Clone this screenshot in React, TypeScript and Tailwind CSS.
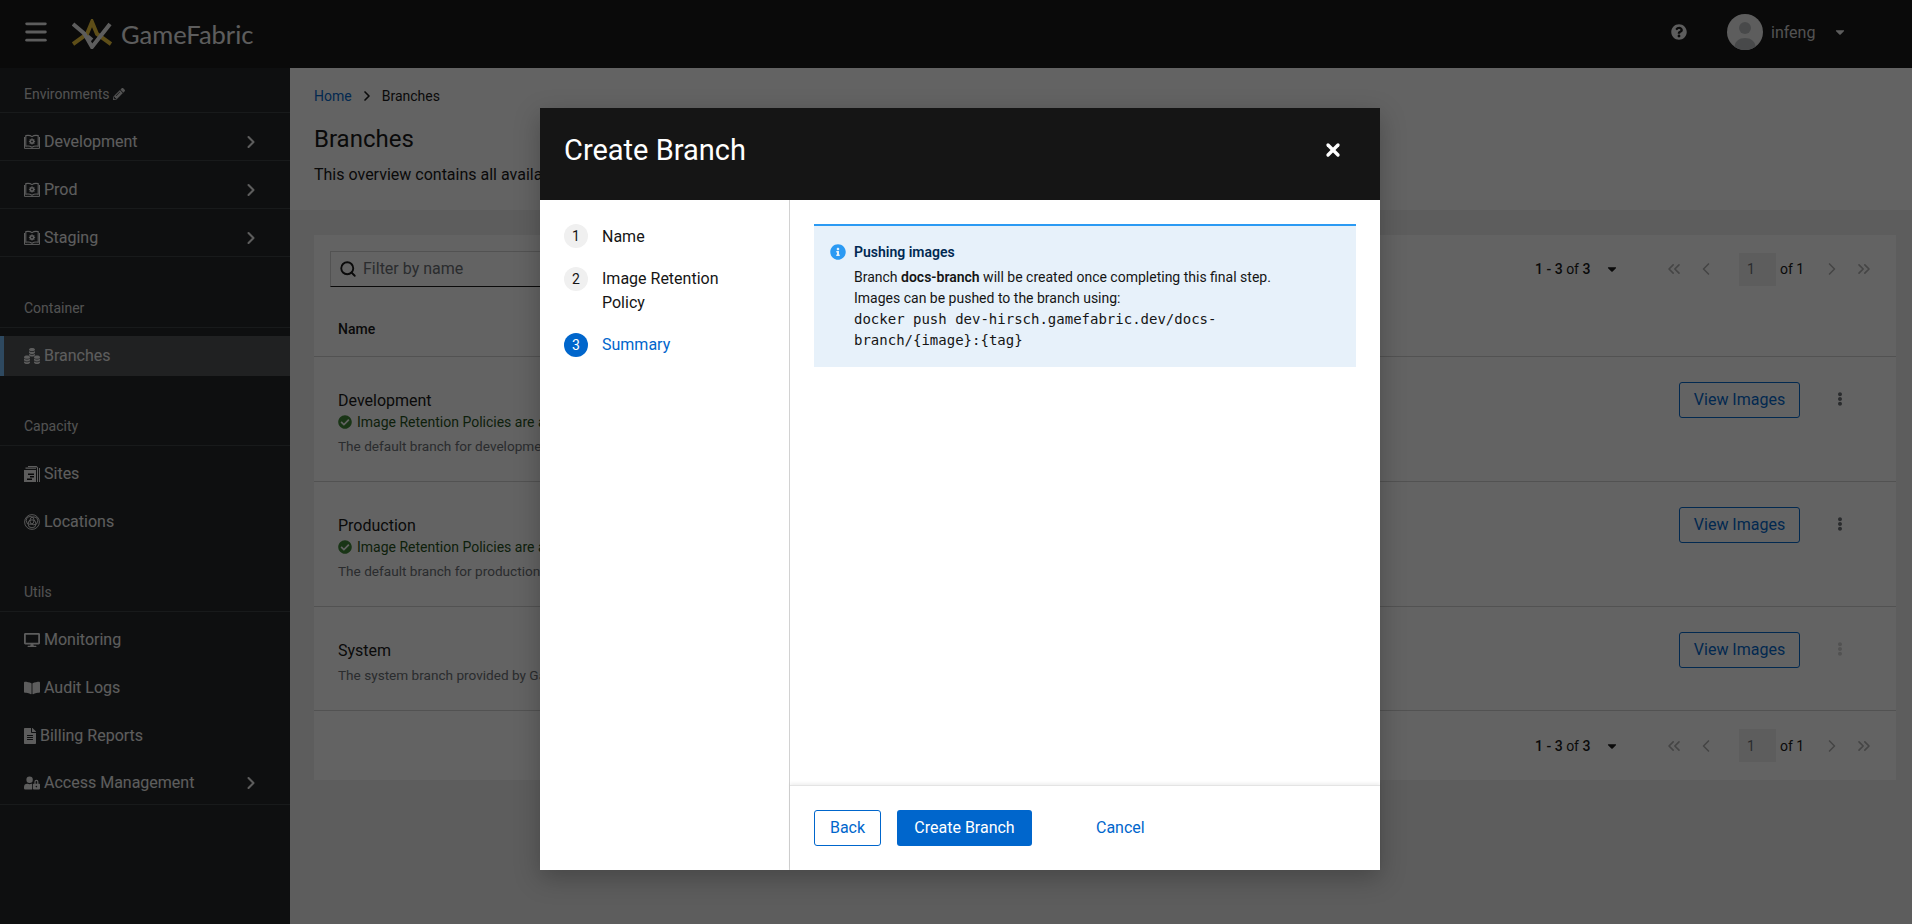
import { ChevronRight, ChevronLeft, ChevronsLeft, ChevronsRight, Menu, Search, X } from "lucide-react";
import {
  FaBookOpen,
  FaCaretDown,
  FaCheckCircle,
  FaDesktop,
  FaEllipsisV,
  FaFileAlt,
  FaInfoCircle,
  FaPencilAlt,
  FaQuestionCircle,
  FaUserLock,
} from "react-icons/fa";
import type { ReactNode } from "react";

function BookCogIcon() {
  return (
    <svg viewBox="0 0 16 16" className="h-4 w-4 shrink-0" fill="none" stroke="currentColor">
      <path d="M1.8 1.6c2.4-.5 4.6-.2 6.2 1 1.6-1.2 3.8-1.5 6.2-1v10.6c-2.4-.4-4.6-.1-6.2 1-1.6-1.1-3.8-1.4-6.2-1z" strokeWidth="1.1" />
      <path d="M.5 3v11.4h15V3" strokeWidth="1" />
      <circle cx="8" cy="7.4" r="1.7" strokeWidth="1.6" />
      <path d="M8 4.2v1.2M8 9.4v1.2M4.9 7.4h1.2M9.9 7.4h1.2M5.8 5.2l.8.8M9.4 8.8l.8.8M10.2 5.2l-.8.8M6.6 8.8l-.8.8" strokeWidth="1" />
    </svg>
  );
}

function CoinsIcon() {
  return (
    <svg viewBox="0 0 16 16" className="h-4 w-4 shrink-0" fill="currentColor">
      <path d="M5 1.6C5 .7 6.3 0 8 0s3 .7 3 1.6S9.7 3.2 8 3.2 5 2.5 5 1.6zM5 3c.6.6 1.7 1 3 1s2.4-.4 3-1v1.4c0 .8-1.3 1.5-3 1.5s-3-.7-3-1.5zM5 5.7c.6.6 1.7 1 3 1s2.4-.4 3-1v1.4C11 7.9 9.7 8.6 8 8.6s-3-.7-3-1.5z" />
      <path d="M0 9.2c0-.9 1.3-1.6 3-1.6s3 .7 3 1.6-1.3 1.6-3 1.6-3-.7-3-1.6zM0 10.6c.6.6 1.7 1 3 1s2.4-.4 3-1V12c0 .8-1.3 1.5-3 1.5S0 12.8 0 12zM0 13.3c.6.6 1.7 1 3 1s2.4-.4 3-1v1.1c0 .8-1.3 1.5-3 1.5s-3-.7-3-1.5z" />
      <path d="M10 9.2c0-.9 1.3-1.6 3-1.6s3 .7 3 1.6-1.3 1.6-3 1.6-3-.7-3-1.6zM10 10.6c.6.6 1.7 1 3 1s2.4-.4 3-1V12c0 .8-1.3 1.5-3 1.5s-3-.7-3-1.5zM10 13.3c.6.6 1.7 1 3 1s2.4-.4 3-1v1.1c0 .8-1.3 1.5-3 1.5s-3-.7-3-1.5z" />
    </svg>
  );
}

function SitesIcon() {
  return (
    <svg viewBox="0 0 16 16" className="h-4 w-4 shrink-0" fill="currentColor">
      <path d="M0 4h12v12H0z" />
      <path d="M1.5 1.5H12v1.3H1.5zM4 0h8.5L14 1.5V16h-1V2l-1-1H4zM15 2h1v14h-1z" />
      <path d="M4 7.5h6v1.4H4zM6 10h4v1.4H6zM3 12.5h5v1.4H3z" fill="#101214" />
    </svg>
  );
}

function LocationsIcon() {
  return (
    <svg viewBox="0 0 16 16" className="h-4 w-4 shrink-0" fill="none" stroke="currentColor" strokeWidth="0.9">
      <circle cx="8" cy="8" r="7.4" />
      <circle cx="6.2" cy="6.4" r="4" />
      <circle cx="9.8" cy="6.8" r="4" />
      <circle cx="8" cy="9.8" r="4" />
    </svg>
  );
}

function NavRow({ icon, label, chevron, className = "h-12" }: { icon: ReactNode; label: string; chevron?: boolean; className?: string }) {
  return (
    <div className={`flex items-center pl-6 text-base text-[#f0f0f0] ${className}`}>
      <span className="mr-1 flex items-center">{icon}</span>
      <span>{label}</span>
      {chevron && <ChevronRight className="ml-auto mr-[29px] h-5 w-5" strokeWidth={2.5} />}
    </div>
  );
}

function NavLabel({ children }: { children: ReactNode }) {
  return <div className="flex h-[41px] items-center border-b border-[#3c3f42] pl-6 pt-px text-sm text-[#d2d2d2]">{children}</div>;
}

function Pagination() {
  return (
    <div className="flex items-center text-sm text-[#151515]">
      <span className="w-[70px] whitespace-nowrap font-medium">
        1 - 3 <span className="font-normal">of</span> 3
      </span>
      <FaCaretDown className="h-3.5 w-3.5 text-[#151515]" />
      <ChevronsLeft className="ml-[45px] h-5 w-5 text-[#b0b0b0]" />
      <ChevronLeft className="ml-3 h-5 w-5 text-[#b0b0b0]" />
      <span className="ml-[23px] flex h-[33px] w-[37px] items-center bg-[#f0f0f0] pl-2 text-[#6a6e73]">1</span>
      <span className="ml-1 w-[42px] whitespace-nowrap">of 1</span>
      <ChevronRight className="h-5 w-5 text-[#b0b0b0]" />
      <ChevronsRight className="ml-3 h-5 w-5 text-[#b0b0b0]" />
    </div>
  );
}

function BranchRow({ name, policy, desc, kebabMuted, height }: { name: string; policy: string; desc: string; kebabMuted?: boolean; height: string }) {
  return (
    <div className={`flex items-start border-b border-[#d2d2d2] pl-6 ${height}`}>
      <div className="min-w-0 flex-1 pt-[33px]">
        <div className="text-base leading-[22px] text-[#151515]">{name}</div>
        {policy && (
          <div className="-mt-px flex h-[22px] items-center text-sm text-[#1e4f18]">
            <FaCheckCircle className="mr-[5px] h-[14px] w-[14px] text-[#3e8635]" />
            {policy}
          </div>
        )}
        <div className="mt-[3px] text-[13.6px] leading-5 text-[#6a6e73]">{desc}</div>
      </div>
      <button type="button" className="mt-[25px] h-9 w-[121px] rounded-[3px] border border-[#06c] text-base text-[#06c]">
        View Images
      </button>
      <FaEllipsisV className={`ml-[33px] mr-[49px] mt-[35px] h-3.5 w-3.5 ${kebabMuted ? "text-[#d2d2d2]" : "text-[#6a6e73]"}`} />
    </div>
  );
}

export default function App() {
  return (
    <div className="relative flex h-[924px] w-[1912px] flex-col overflow-hidden bg-[#f0f0f0] font-['Roboto',sans-serif]">
      <header className="flex h-[68px] shrink-0 items-center bg-[#151515] pl-[22px] text-[#f0f0f0]">
        <Menu className="-mt-1 h-7 w-7" strokeWidth={2.4} />
        <svg viewBox="0 0 40 30" className="ml-[22px] h-[30px] w-10" fill="none" strokeWidth="4">
          <path d="M1 5l19 16" stroke="#f0f0f0" />
          <path d="M1 25l14-10 5-12 5 12 14 10" stroke="#f2c83c" />
          <path d="M12 14l8 14 18-23" stroke="#f0f0f0" />
        </svg>
        <span className="ml-[9px] font-['Lato',sans-serif] text-[25.5px] text-[#f0f0f0]">GameFabric</span>
        <FaQuestionCircle className="-mt-1 ml-auto h-4 w-4" />
        <span className="-mt-1 ml-10 flex h-9 w-9 items-end justify-center overflow-hidden rounded-full bg-[#f0f0f0]">
          <svg viewBox="0 0 36 36" className="h-9 w-9" fill="#b8bbbe">
            <circle cx="18" cy="14" r="6" />
            <path d="M7 36c0-9 5-12 11-12s11 3 11 12z" />
          </svg>
        </span>
        <span className="-mt-[2px] ml-2 w-[62px] text-base text-[#d2d2d2]">infeng</span>
        <FaCaretDown className="-mt-1 mr-[65px] h-3.5 w-3.5" />
      </header>

      <div className="flex min-h-0 flex-1">
        <aside className="w-[290px] shrink-0 bg-[#212427] text-[#f0f0f0]">
          <div className="flex h-[45px] items-center border-b border-[#3c3f42] pl-6 pt-2 text-sm text-[#d2d2d2]">
            Environments
            <FaPencilAlt className="ml-1 h-3 w-3" />
          </div>
          <NavRow icon={<BookCogIcon />} label="Development" chevron className="h-12 border-b border-[#3c3f42] pt-[10px]" />
          <NavRow icon={<BookCogIcon />} label="Prod" chevron className="h-12 border-b border-[#3c3f42] pt-[10px]" />
          <NavRow icon={<BookCogIcon />} label="Staging" chevron className="h-12 border-b border-[#3c3f42] pt-[10px]" />
          <div className="h-[30px]" />
          <NavLabel>Container</NavLabel>
          <div className="h-2" />
          <NavRow icon={<CoinsIcon />} label="Branches" className="h-10 border-l-4 border-[#73bcf7] bg-[#4f5255] !pl-5" />
          <div className="h-[29px]" />
          <NavLabel>Capacity</NavLabel>
          <div className="h-1" />
          <NavRow icon={<SitesIcon />} label="Sites" />
          <NavRow icon={<LocationsIcon />} label="Locations" />
          <div className="h-[25px]" />
          <NavLabel>Utils</NavLabel>
          <div className="h-1" />
          <NavRow icon={<FaDesktop className="h-4 w-4" />} label="Monitoring" />
          <NavRow icon={<FaBookOpen className="h-4 w-4" />} label="Audit Logs" />
          <NavRow icon={<FaFileAlt className="h-4 w-3" />} label="Billing Reports" />
          <NavRow icon={<FaUserLock className="h-4 w-4" />} label="Access Management" chevron className="h-[45px] border-b border-[#3c3f42] pt-[2px]" />
        </aside>

        <main className="min-w-0 flex-1">
          <section className="h-[142px] bg-white px-6 pt-5">
            <div className="flex items-center text-sm leading-4">
              <span className="text-[#06c]">Home</span>
              <ChevronRight className="mx-[7px] h-4 w-4 text-[#151515]" strokeWidth={2.5} />
              <span className="text-[#151515]">Branches</span>
            </div>
            <h1 className="mt-[19px] text-2xl leading-8 text-[#151515]">Branches</h1>
            <p className="mt-[8px] text-base text-[#151515]">This overview contains all available branches.</p>
          </section>
          <section className="pl-6 pr-4 pt-[25px]">
            <div className="h-[545px] bg-white">
              <div className="flex h-[68px] items-center pl-4 pr-[22px]">
                <div className="flex h-[36px] w-[360px] items-center gap-[6px] border border-[#d2d2d2] border-b-[#151515] pl-2">
                  <Search className="h-[18px] w-[18px] text-[#151515]" strokeWidth={2.5} />
                  <span className="text-base text-[#6a6e73]">Filter by name</span>
                </div>
                <div className="ml-auto">
                  <Pagination />
                </div>
              </div>
              <div className="flex h-[54px] items-center border-b border-[#d2d2d2] pb-[2px] pl-6 text-sm font-medium text-[#151515]">Name</div>
              <BranchRow height="h-[125px]" name="Development" policy="Image Retention Policies are active" desc="The default branch for development." />
              <BranchRow height="h-[125px]" name="Production" policy="Image Retention Policies are active" desc="The default branch for production." />
              <BranchRow height="h-[104px]" name="System" policy="" desc="The system branch provided by GameFabric." kebabMuted />
              <div className="flex h-[69px] items-center justify-end pr-[22px]">
                <Pagination />
              </div>
            </div>
          </section>
        </main>
      </div>

      {/* backdrop + modal */}
      <div className="absolute inset-0 bg-[rgba(3,3,3,0.62)]" />
      <div className="absolute left-[540px] top-[108px] flex h-[762px] w-[840px] flex-col bg-white shadow-[0_8px_24px_rgba(3,3,3,0.25)]">
        <div className="flex h-[92px] shrink-0 items-center bg-[#151515] pb-[6px] pl-6 text-white">
          <h2 className="text-[29px]">Create Branch</h2>
          <X className="-mt-[2px] ml-auto mr-[37px] h-5 w-5" strokeWidth={4} />
        </div>
        <div className="flex min-h-0 flex-1">
          <nav className="w-[250px] shrink-0 border-r border-[#d2d2d2] pl-6 pr-4 pt-6 text-base text-[#151515]">
            <div className="flex items-start gap-[14px]">
              <span className="flex h-6 w-6 shrink-0 items-center justify-center rounded-full bg-[#f0f0f0] text-sm">1</span>
              <span className="pt-px leading-6">Name</span>
            </div>
            <div className="mt-[18px] flex items-start gap-[14px]">
              <span className="flex h-6 w-6 shrink-0 items-center justify-center rounded-full bg-[#f0f0f0] text-sm">2</span>
              <span className="w-[130px] leading-6">Image Retention Policy</span>
            </div>
            <div className="mt-[18px] flex items-start gap-[14px]">
              <span className="flex h-6 w-6 shrink-0 items-center justify-center rounded-full bg-[#06c] text-sm text-white">3</span>
              <span className="leading-6 text-[#06c]">Summary</span>
            </div>
          </nav>
          <div className="flex min-w-0 flex-1 flex-col">
            <div className="flex-1 px-6 pt-6">
              <div className="flex h-[143px] border-t-2 border-[#2b9af3] bg-[#e7f1fa] px-4 pt-4 text-sm leading-[21px] text-[#151515]">
                <FaInfoCircle className="mr-2 mt-[2px] h-4 w-4 shrink-0 text-[#2b9af3]" />
                <div className="w-[430px]">
                  <div className="font-semibold text-[#002952]">Pushing images</div>
                  <div className="mt-1">
                    Branch <strong className="font-semibold">docs-branch</strong> will be created once completing this final step.
                  </div>
                  <div>Images can be pushed to the branch using:</div>
                  <code className="font-['DejaVu_Sans_Mono',monospace] text-sm leading-[21px]">
                    docker push dev-hirsch.gamefabric.dev/docs-branch/{"{image}"}:{"{tag}"}
                  </code>
                </div>
              </div>
            </div>
            <div className="flex h-[85px] shrink-0 items-center border-t border-[#e4e4e4] px-6 text-base shadow-[0_-2px_3px_rgba(3,3,3,0.06)]">
              <button type="button" className="h-9 w-[67px] rounded-[3px] border border-[#06c] text-[#06c]">
                Back
              </button>
              <button type="button" className="ml-4 h-9 w-[135px] rounded-[3px] bg-[#06c] text-white">
                Create Branch
              </button>
              <button type="button" className="ml-[64px] text-[#06c]">
                Cancel
              </button>
            </div>
          </div>
        </div>
      </div>
    </div>
  );
}
